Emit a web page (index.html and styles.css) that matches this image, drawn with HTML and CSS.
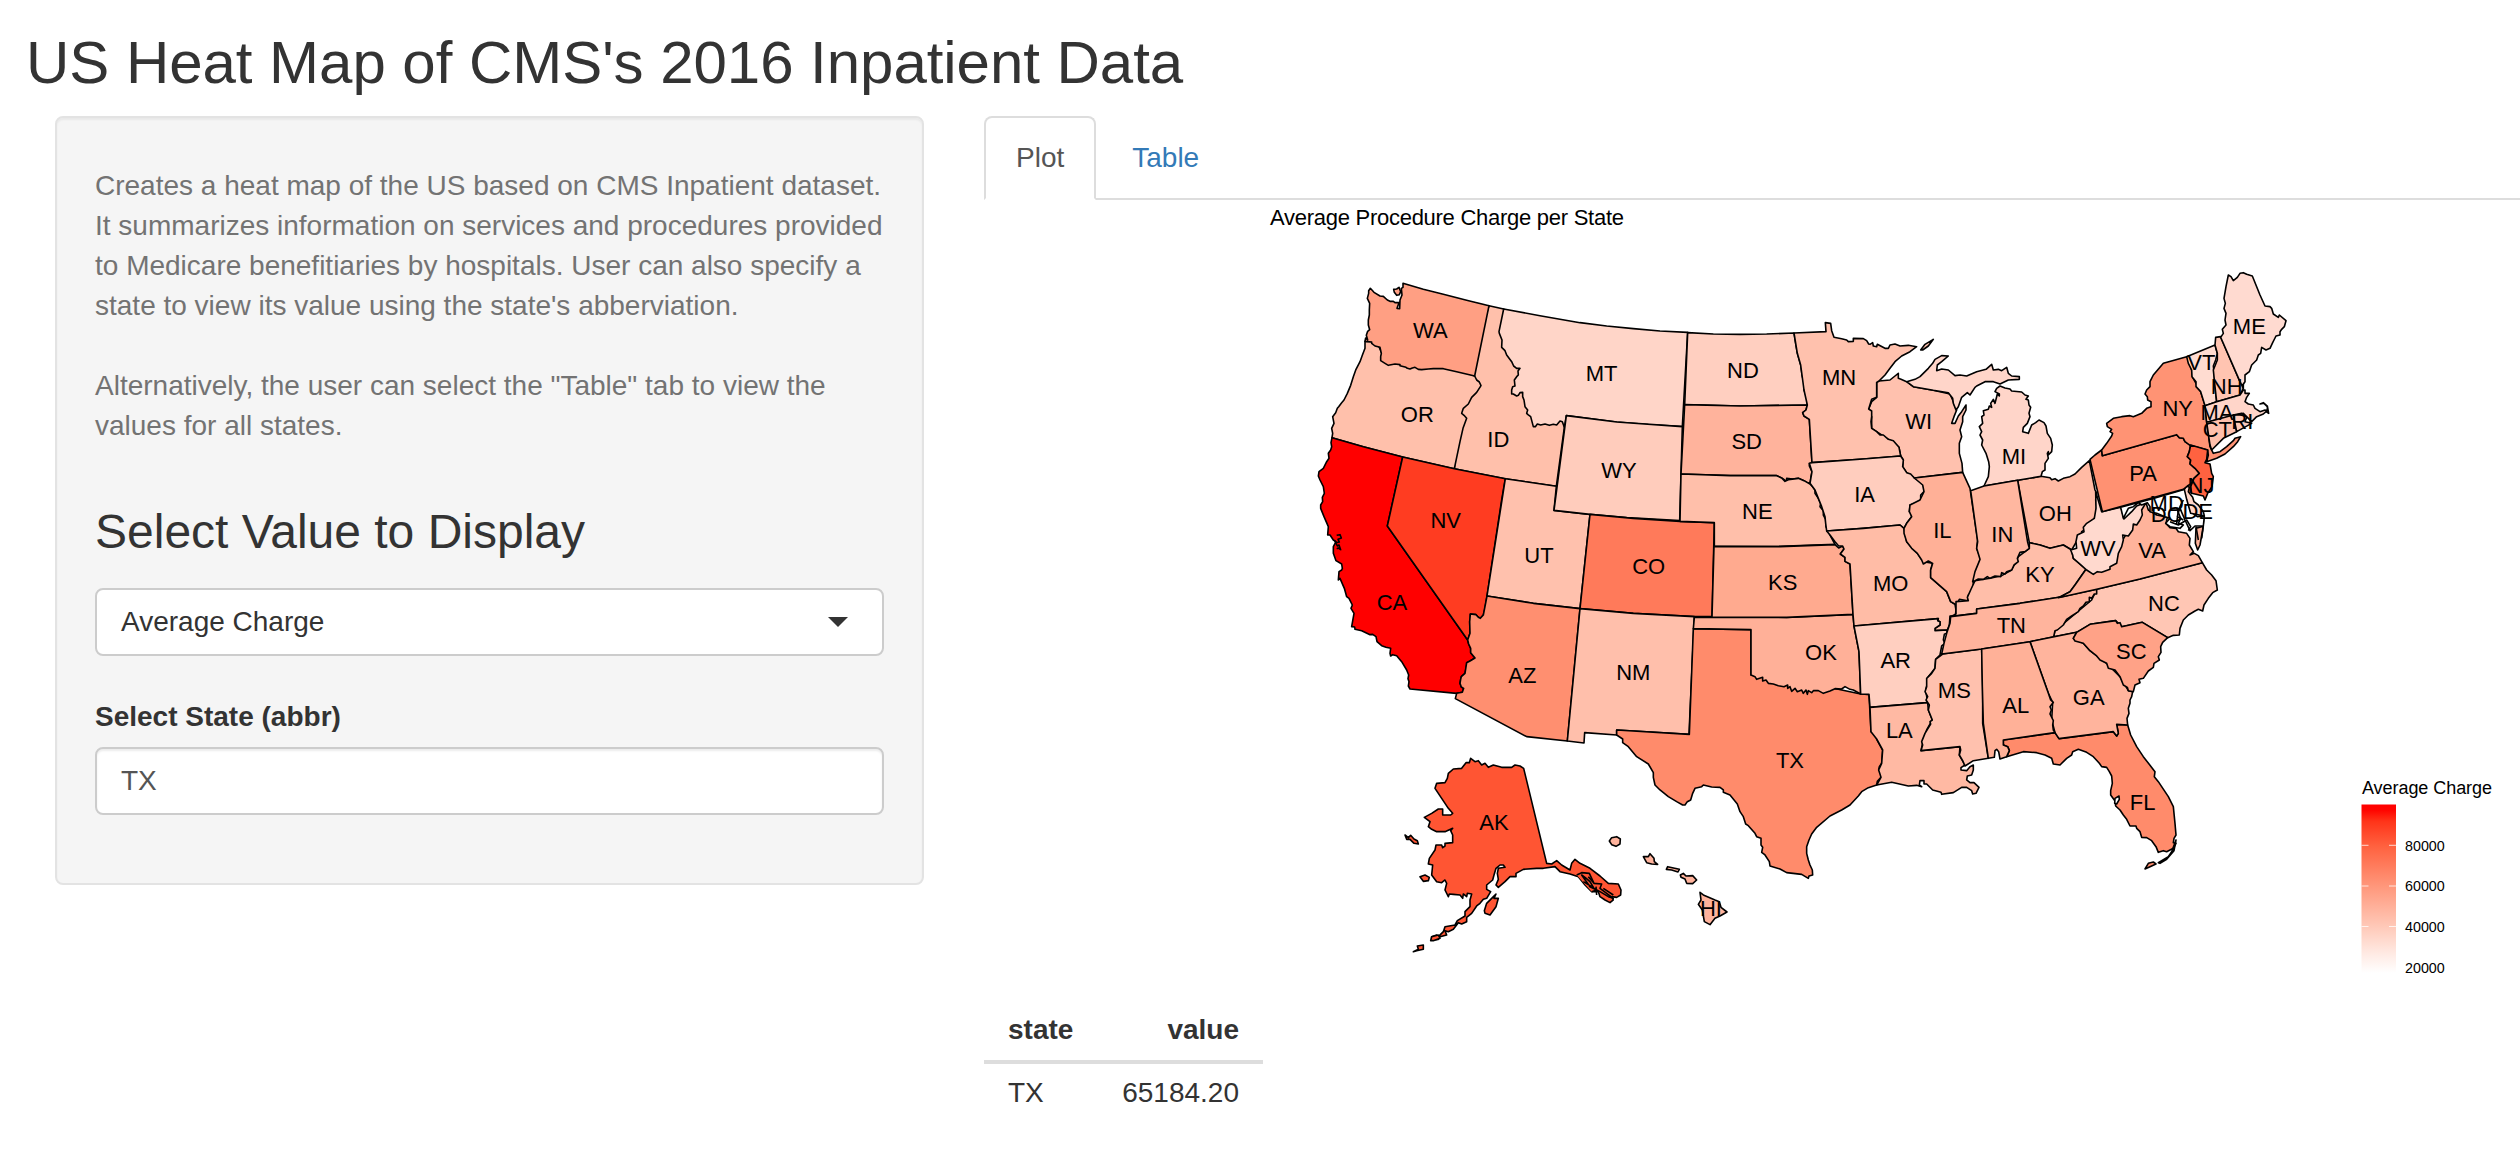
FILE: index.html
```html
<!DOCTYPE html>
<html lang="en">
<head>
<meta charset="utf-8">
<title>US Heat Map of CMS's 2016 Inpatient Data</title>
<link rel="stylesheet" href="styles.css">
</head>
<body>
<h2 class="title">US Heat Map of CMS's 2016 Inpatient Data</h2>
<div class="layout">
<form class="well">
<p class="help">Creates a heat map of the US based on CMS Inpatient dataset. It summarizes information on services and procedures provided to Medicare benefitiaries by hospitals. User can also specify a state to view its value using the state's abberviation.<br><br>Alternatively, the user can select the "Table" tab to view the values for all states.</p>
<h3 class="subtitle">Select Value to Display</h3>
<div class="control select"><span>Average Charge</span><i class="caret"></i></div>
<label class="label" for="state">Select State (abbr)</label>
<input class="control input" id="state" type="text" value="TX">
</form>
<main class="main">
<ul class="tabs"><li class="tab active">Plot</li><li class="tab">Table</li></ul>
<svg class="plot" viewBox="984 200 1536 800">
<defs><linearGradient id="scale" x1="0" y1="0" x2="0" y2="1">
<stop offset="0" stop-color="#f00"/><stop offset=".035" stop-color="#ff0500"/><stop offset=".1" stop-color="#ff3419"/><stop offset=".25" stop-color="#ff6240"/><stop offset=".48" stop-color="#ff967a"/><stop offset=".72" stop-color="#ffc8b7"/><stop offset=".88" stop-color="#ffe9e2"/><stop offset="1" stop-color="#fff"/>
</linearGradient></defs>
<text class="plot-title" x="1270" y="225" textLength="354">Average Procedure Charge per State</text>
<g transform="translate(1300 260) scale(.333333)">
<g class="states">
<!-- West -->
<path fill="#ffc0ab" d="M567 137 611 147 640 180 700 440 793 480 793 502 769 679 616 656 463 626 480 420Z"/>
<path fill="#ffc0ab" d="M195 244 195 265 187 286 180 305 168 328 160 350 152 376 142 400 132 420 125 428 116 440 112 445 107 458 98 470 102 490 95 505 98 520 96 533 190 560 308 591 463 626 480 545 489 505 500 475 492 466 485 460 490 445 505 432 515 412 530 397 543 377 538 366 530 360 524 348 430 310 250 290 230 244Z"/>
<path fill="#ff9f83" d="M309 70 370 88 430 103 500 121 567 137 524 348 470 335 430 326 400 326 385 327 365 329 355 328 345 322 337 324 330 327 322 325 318 322 300 317 300 314 285 312 265 316 255 310 242 302 242 290 244 280 240 262 225 258 215 250 215 246 195 244 197 234 203 240 199 226 203 214 209 209 205 195 205 180 208 165 208 150 209 130 202 115 206 100 206 92 211 85 222 97 240 108 250 109 262 120 270 124 280 124 285 128 297 128 291 145 299 146 300 120 306 105 304 85 309 82Z"/>
<path fill="#ff9f83" d="M281 88 290 87 297 82 302 95 298 104 290 106 283 97Z"/>
<path fill="#ffd5c8" d="M611 147 720 167 840 188 920 198 1000 206 1080 213 1163 217 1147 500 1045 494 950 486 799 467 793 502 787 485 780 483 770 495 760 493 748 496 735 492 722 495 712 492 706 500 700 500 692 470 684 464 680 460 683 450 675 440 672 420 668 410 668 397 660 398 655 406 650 408 640 402 635 402 635 390 638 380 645 378 643 360 650 350 655 345 654 333 660 325 650 325 641 318 635 305 620 285 615 272 605 262 606 240 598 220 597 215Z"/>
<path fill="#ff0000" d="M96 533 190 560 308 591 262 798 503 1140 506 1152 512 1165 512 1178 525 1194 510 1203 500 1208 500 1215 495 1240 484 1250 482 1258 480 1270 484 1281 491 1285 487 1297 470 1300 330 1287 325 1278 327 1265 324 1256 326 1245 320 1230 305 1205 290 1187 278 1184 272 1188 270 1180 272 1165 258 1162 245 1157 231 1145 228 1130 218 1123 210 1124 185 1112 165 1108 164 1101 155 1100 162 1060 153 1045 157 1035 147 1015 140 1010 133 985 120 955 115 960 117 935 125 930 127 925 125 912 108 902 100 880 100 860 108 845 100 840 90 825 83 825 85 800 72 770 62 745 62 735 68 725 67 712 73 700 70 680 60 660 55 648 57 635 70 625 80 605 87 595 85 580 92 570 95 560 93 548Z"/>
<path fill="#ff3c21" d="M308 591 463 626 616 656 605 720 561 1008 555 1045 550 1065 541 1075 535 1072 528 1064 511 1062 511 1075 509 1085 510 1120 503 1140 262 798Z"/>
<path fill="#ffc1ad" d="M616 656 769 679 762 751 870 763 840 1046 700 1030 561 1008Z"/>
<path fill="#ffccbc" d="M799 467 950 486 1147 500 1139 782 980 773 870 763 762 751Z"/>
<path fill="#ff7a5a" d="M870 763 1000 775 1140 784 1243 788 1236 1070 1183 1070 1000 1060 840 1046Z"/>
<path fill="#ff8f70" d="M561 1008 700 1030 840 1046 802 1443 680 1430 466 1316 470 1300 487 1297 491 1285 484 1281 480 1270 482 1258 484 1250 495 1240 500 1208 510 1203 525 1194 512 1178 512 1165 506 1152 503 1140 510 1120 509 1085 511 1062 528 1064 535 1072 541 1075 550 1065Z"/>
<path fill="#ffbfab" d="M840 1046 1000 1060 1183 1070 1167 1423 950 1410 950 1425 854 1418 852 1449 802 1443Z"/>
<path fill="none" d="M110 826 120 824 124 834 114 838 118 846 108 848 104 842 112 858 117 855 122 869 115 864 110 866"/>
<!-- Great plains -->
<g transform="translate(1140 150)">
<path fill="#ffcfc0" d="M23 68 100 72 180 73 260 72 342 69 346 95 352 130 362 165 366 195 372 220 372 240 380 262 382 285 180 288 14 284Z"/>
<path fill="#ffb39c" d="M14 284 180 288 382 285 378 300 368 308 372 318 388 328 396 458 388 461 388 468 396 485 393 500 390 520 380 518 372 512 355 505 338 507 320 505 320 514 305 504 290 497 150 497 3 492Z"/>
<path fill="#ffbfaa" d="M3 492 150 497 290 497 305 504 315 514 325 509 355 505 372 512 390 522 398 530 405 540 405 550 415 565 422 580 420 590 430 602 430 615 437 628 438 650 450 675 465 703 300 709 103 710 103 638 0 634Z"/>
<path fill="#ffc1ae" d="M590 217 597 213 630 210 645 198 655 190 655 205 663 208 680 215 700 230 760 241 810 252 820 275 826 292 830 300 822 320 815 340 825 340 835 318 845 305 858 285 858 300 848 320 848 335 840 360 845 380 838 400 838 430 846 460 848 487 703 504 680 488 668 470 670 450 662 438 657 412 640 398 590 365 575 355 575 320 566 297 575 275 590 262Z"/>
<path fill="#ffc1ad" d="M342 69 438 65 436 38 452 40 455 62 462 82 485 86 500 90 505 95 520 94 520 85 550 86 560 92 566 102 570 103 578 98 580 108 590 110 592 103 615 115 625 115 630 105 645 102 660 108 685 106 710 110 690 125 665 138 645 155 630 175 615 195 597 213 590 217 590 262 575 268 566 297 575 303 575 320 573 335 575 355 590 365 600 375 610 375 625 388 640 392 657 412 662 438 550 447 396 458 388 328 372 318 368 308 378 300 382 285 372 240 362 165 352 130Z"/>
<path fill="#ffcdbe" d="M396 458 550 447 662 438 670 450 668 470 680 488 692 492 703 504 723 515 732 530 732 545 722 555 722 570 705 580 690 585 688 605 695 610 695 620 680 640 672 655 660 645 550 655 440 663 437 640 435 620 425 590 415 565 405 540 390 520 396 485 388 460Z"/>
</g>
<g transform="translate(1080 840)">
<path fill="#ff8b6b" d="M100 266 273 269 273 405 450 430 602 462 627 463 633 575 650 587 650 597 668 630 665 670 658 680 656 690 663 695 663 712 652 724 650 735 625 743 605 755 595 768 570 795 545 810 510 828 470 862 455 882 447 900 440 920 440 940 445 960 450 975 457 990 458 1005 447 1008 445 1015 425 1003 380 998 360 987 330 978 328 965 315 945 305 937 308 922 303 915 303 895 290 890 285 880 265 857 257 852 250 830 240 815 232 792 210 765 190 757 190 750 180 742 155 741 130 735 125 740 105 745 98 760 92 780 82 785 75 795 68 795 50 785 25 770 0 750 -15 735 -20 712 -20 698 -35 672 -70 650 -95 620 -112 608 -112 597 -130 585 -130 570 88 583Z"/>
<path fill="#ffb098" d="M103 232 380 232 579 223 582 258 597 335 602 462 580 450 570 448 555 440 545 447 525 446 510 453 490 460 475 452 460 452 455 458 445 452 442 463 438 450 430 460 425 450 412 455 405 445 395 454 390 440 383 445 383 435 372 440 355 437 340 432 325 430 318 420 308 423 308 412 290 418 285 410 273 405 273 269 100 266Z"/>
<path fill="#ffaa8f" d="M162 19 360 20 525 14 536 24 548 18 552 27 541 42 555 52 555 64 570 72 579 223 380 232 156 231Z"/>
<path fill="#ffbca6" d="M500-27 610-35 720-45 732-35 740 5 772 40 790 65 818 70 812 90 812 113 860 155 872 185 885 193 888 210 886 228 870 228 868 255 862 270 825 272 825 265 840 255 840 245 833 242 835 236 582 258 579 223 570 72 555 64 555 52 541 42 552 27 548 18 536 18 525 5 510-15Z"/>
<path fill="#ffcfc0" d="M582 258 835 236 833 242 840 245 840 255 825 265 825 272 862 270 860 280 853 283 850 300 855 310 845 318 840 345 827 358 825 385 805 410 802 430 797 450 803 488 630 502 627 463 602 462 597 335Z"/>
<path fill="#ffb9a3" d="M630 502 803 488 805 510 817 540 800 570 790 600 783 632 900 620 898 645 915 675 903 683 903 690 920 692 930 680 940 675 940 690 935 705 922 708 920 720 930 728 942 728 957 742 948 760 938 762 935 752 920 742 905 742 880 758 845 763 843 757 818 750 800 732 792 732 792 722 780 722 778 735 785 740 770 736 745 738 695 727 650 735 663 712 656 690 665 670 668 630 650 597 633 575Z"/>
<path fill="#ffc1ae" d="M848 342 965 327 968 440 968 550 985 655 940 662 915 678 908 662 898 645 902 630 900 620 783 632 788 615 785 605 795 580 812 552 810 545 817 540 805 510 808 495 798 480 803 470 795 455 800 440 800 415 815 400 825 385 827 358Z"/>
</g>
<path fill="#ffb097" d="M1843 654 1988 637 2010 685 2033 840 2030 865 2042 895 2028 940 2030 955 2020 965 2020 992 2005 1005 2003 1022 1978 1018 1970 1035 1952 1025 1940 995 1892 953 1892 930 1898 910 1885 903 1870 912 1865 900 1852 880 1835 865 1820 845 1812 820 1812 805 1820 790 1835 770 1828 755 1830 735 1860 720 1872 695 1868 675Z"/>
<!-- Great lakes -->
<g transform="translate(1980 180)">
<path fill="#ffd5c9" d="M-160 185-135 178-120 170-95 145-82 130-75 118-55 107-35 108-55 125-68 135-70 152-55 147-35 150-15 167 0 165 20 168 50 155 78 148 95 133 100 150 115 148 125 152 140 142 145 160 155 168 178 170 178 178 145 180 120 192 100 185 75 185 50 198 45 202 30 225 22 218 5 232-5 260-12 270-20 250-22 235-35 218-80 211-140 200Z"/>
<path fill="#ffc1ad" d="M-118 90-105 73-80 58-95 78-112 90Z"/>
<path fill="#ffbaa4" d="M173 481 243 469 270 473 275 479 285 476 295 483 310 475 330 470 345 462 365 442 388 422 405 510 410 520 407 540 410 560 407 590 400 598 380 615 380 625 365 635 372 645 355 655 335 690 310 675 270 685 240 675 208 668Z"/>
<path fill="#ffd5c9" d="M110 205 120 198 135 204 150 207 155 213 185 216 195 225 205 228 198 238 205 240 207 255 212 262 207 280 210 290 202 310 190 322 188 335 205 340 215 315 227 308 237 300 252 308 258 318 262 340 272 355 277 375 275 395 265 405 265 395 262 400 265 415 255 430 255 450 247 455 243 469 173 481 72 498 85 470 88 440 86 425 78 400 65 375 68 360 60 345 65 335 58 320 68 310 65 290 72 285 70 272 85 268 88 258 95 262 92 250 100 238 105 250 112 222 118 228 118 222 105 215Z"/>
</g>
<!-- South and Appalachia -->
<g transform="translate(1920 750)">
<path fill="#ffbea9" d="M32 320 48 312 48 275 85 272 82 262 92 240 105 212 150 205 185 197 215 180 235 140 268 115 268 98 300 105 330 115 370 105 395 120 400 145 438 178 405 225 390 245 362 261 240 280 110 297 110 310Z"/>
<path fill="#ffb7a0" d="M92-58 132-72 233-89 263 97 268 115 255 125 240 127 232 145 235 155 222 165 215 180 200 185 195 192 185 188 182 200 165 198 150 205 142 200 130 208 115 207 105 212 98 215 105 185 120 148 110 115 113 95Z"/>
<path fill="#ffc6b4" d="M470 238 600 207 787 158 800 180 815 195 828 212 832 240 818 248 805 265 792 285 788 303 775 298 765 303 745 315 730 330 720 355 718 375 700 376 683 383 607 337 545 350 527 332 450 343 410 367 341 380 345 362 455 270Z"/>
<path fill="#ffb49d" d="M32 320 110 310 110 297 240 280 362 261 470 238 470 252 463 252 455 265 448 262 448 275 438 277 430 288 420 295 415 305 395 318 380 328 370 345 352 360 345 362 341 380 270 395 125 417 5 432 12 400 20 370 30 340Z"/>
<path fill="#ffb39b" d="M355 263 470 238 600 207 787 158 775 137 763 130 750 135 760 125 748 105 750 85 740 70 715 65 708 55 690 53 678 40 682 22 650 15 625 0 618-22 600 0 560 70 500 170 438 178 405 225 390 245Z"/>
<path fill="#ffb39b" d="M768 55 785 50 792 20 788 60 780 105 773 120 766 100Z"/>
<path fill="#ffd9ce" d="M467-55 485 5 543-8 552 27 575 5 590-12 605-18 618-22 605 0 607 15 600 30 590 45 580 42 578 60 565 78 548 75 550 90 545 110 535 130 530 160 510 170 510 178 485 187 472 185 460 193 440 180 420 162 400 145 398 135 392 120 410 115 408 95 412 75 432 65 430 52 440 40 463 25 468-5Z"/>
<path fill="#ff8b6b" d="M190 690 345 668 357 686 520 665 530 678 535 670 530 643 563 645 572 675 590 710 610 740 645 785 643 800 655 815 685 860 700 890 705 940 708 975 702 985 700 998 708 1000 700 1015 680 1025 670 1022 655 1027 648 1010 635 992 620 983 605 982 600 965 590 955 588 948 570 948 560 928 550 915 540 900 527 888 525 873 512 855 512 842 517 820 515 798 508 785 500 772 485 770 478 760 460 740 440 727 415 718 398 725 395 735 380 745 360 765 340 762 335 745 315 735 290 728 250 725 200 740 208 722 203 710 190 705Z"/>
<path fill="#ffb49d" d="M270 395 410 367 400 385 430 400 450 422 500 460 540 500 565 542 578 545 575 560 570 570 570 580 565 595 567 610 561 625 563 645 530 643 535 670 530 678 520 665 357 686 345 668 335 630 338 577 325 550Z"/>
<path fill="#ffa287" d="M410 367 450 343 527 332 532 340 540 338 545 350 607 337 683 383 668 397 662 410 663 427 655 440 658 450 642 460 640 472 625 483 610 505 597 508 600 518 585 525 580 545 565 542 562 532 550 525 540 500 525 480 505 475 500 460 480 450 470 438 450 422 430 400 405 393 400 385Z"/>
<path fill="#ffb198" d="M125 417 270 395 325 550 332 570 340 577 330 590 334 600 330 612 340 632 338 645 340 660 345 668 190 690 190 705 203 710 208 722 200 740 180 747 176 725 170 718 165 722 163 742 145 745 130 640 127 530Z"/>
<path fill="#fff" d="M525 865 537 858 538 868 530 882 524 880Z"/>
<path class="reef" d="M655 1058 685 1040 695 1025 708 990 702 1022 680 1048 660 1060Z"/>
<path fill="#ff8b6b" d="M615 1077 625 1060 640 1056 648 1062 630 1070Z"/>
</g>
<!-- Northeast -->
<g transform="translate(2310 0)">
<path fill="#fff" d="M152 742 245 717 345 688 362 755 382 770 403 768 400 798 375 798 360 812 345 780 330 745 322 750 332 775 325 790 340 795 330 805 300 800 287 790 300 775 285 770 260 760 240 755 240 740 232 728 215 735 205 728 190 740 175 745 160 775Z"/>
<path fill="#ffd5c8" d="M343 688 350 678 358 682 355 695 368 712 372 725 385 735 400 755 403 768 362 760 350 718Z"/>
<path fill="none" d="M325 750 320 790 M340 720 330 740 322 770 340 780 M300 785 325 795 350 780 362 800 355 812 M378 800 385 840M400 798 395 835"/>
<path fill="#ff9172" d="M60 598 75 585 95 570 97 587 320 524 328 533 340 535 345 545 362 555 358 575 352 590 362 600 360 612 375 625 388 640 372 655 362 672 352 678 340 688 97 755Z"/>
<path fill="#ff9374" d="M95 570 110 550 125 528 128 520 120 515 125 508 112 500 110 490 130 475 155 470 180 467 190 470 215 460 230 445 243 440 243 425 233 420 232 410 225 402 230 390 240 380 240 365 250 345 280 310 350 290 362 303 360 315 365 330 368 352 378 370 392 395 405 435 410 485 420 560 430 580 450 575 470 560 490 542 495 535 512 530 503 545 490 560 465 582 440 595 410 605 415 585 413 570 360 556 345 545 340 535 328 533 320 524 97 587Z"/>
<path fill="#ff6240" d="M362 555 413 570 410 598 405 608 420 612 425 640 430 650 426 680 413 700 405 720 400 708 365 700 362 680 372 655 388 640 375 625 360 612 362 600 352 590 358 575Z"/>
<path fill="#ffdcd1" d="M350 290 435 255 442 280 437 300 430 318 433 345 435 380 440 425 405 437 392 395 378 380 378 365 366 350 365 330 355 310Z"/>
<path fill="#ffc4b1" d="M435 255 437 232 452 230 510 365 520 370 520 385 510 405 440 425 435 380 430 330 442 300 442 280Z"/>
<path fill="#ffdad0" d="M452 232 460 220 457 208 468 195 465 180 468 160 462 145 466 130 462 115 468 80 475 45 483 50 490 62 502 52 510 40 520 38 530 43 547 48 570 105 585 138 600 140 605 145 610 162 625 172 628 165 648 182 643 200 635 208 630 215 630 225 618 228 612 240 608 248 600 265 588 270 575 262 572 280 565 285 560 300 545 315 538 335 525 345 525 365 518 375 520 385 510 365Z"/>
<path fill="#ffd5c9" d="M405 437 440 425 510 405 520 390 525 390 525 400 538 400 530 412 525 425 535 432 550 435 555 445 570 455 585 450 592 452 592 440 582 430 570 432 580 428 592 438 596 460 588 455 580 462 560 470 545 485 520 460 410 487Z"/>
<path fill="#ffc0ac" d="M410 487 490 465 500 515 460 535 425 570 420 555Z"/>
<path fill="#ffcab9" d="M490 465 515 460 530 472 525 485 545 490 500 515Z"/>
</g>
<!-- Alaska and Hawaii -->
<g transform="translate(270 1440)">
<g fill="#ff5533">
<path d="M401 85 470 370 485 372 500 362 515 375 540 390 545 370 555 358 570 370 600 385 630 408 655 430 685 432 693 450 692 465 680 472 665 470 670 480 660 488 645 480 630 470 625 455 605 455 585 435 565 410 540 402 510 395 495 380 460 385 440 385 400 388 378 400 378 410 360 410 345 425 325 442 318 435 325 418 322 400 325 385 345 382 340 375 330 375 318 385 312 405 308 420 290 435 290 448 302 455 290 475 280 478 270 490 260 498 245 520 230 532 230 545 215 552 205 548 190 568 175 575 165 572 170 585 150 590 145 598 125 600 125 590 140 585 145 590 160 575 165 560 195 555 202 542 225 528 225 515 240 500 240 480 245 462 232 460 230 470 220 462 218 475 210 465 190 463 178 462 175 470 165 450 170 430 165 420 155 428 140 425 125 405 128 375 115 372 118 355 135 330 138 315 155 315 158 323 165 318 165 310 188 308 188 285 182 272 188 265 165 275 140 275 125 268 115 260 120 245 103 232 125 220 145 207 158 207 158 225 182 225 188 220 175 205 165 190 155 175 135 145 140 130 165 128 172 115 175 100 190 87 215 85 228 68 238 68 242 55 255 65 265 62 275 75 285 70 295 82 310 75 335 82 365 82 375 75 390 78Z"/>
<path d="M45 285 55 293 62 286 72 297 82 302 85 312 72 310 60 298 50 298Z"/>
<path d="M90 410 105 405 118 412 115 422 100 424Z"/>
<path d="M283 512 290 490 308 472 318 462 312 475 325 475 318 500 300 525 285 520Z"/>
<path d="M70 635 85 628 82 618 100 615 100 628 80 632Z"/>
<path d="M122 602 125 590 145 585 150 595 130 602Z"/>
<path d="M560 405 575 398 598 400 612 430 635 432 630 445 650 460 670 475 655 470 630 455 612 445 600 425 585 412 575 405 600 440 620 450 605 455M612 430 595 410M620 465 618 440M580 425 605 440M640 445 670 465"/>
</g>
<g fill="#ffb39c">
<path d="M658 303 665 293 680 290 691 297 690 312 678 319 665 314Z"/>
<path d="M760 350 775 350 780 341 792 355 793 365 803 373 785 372 770 368Z"/>
<path d="M829 388 833 380 868 388 864 396 845 390Z"/>
<path d="M871 405 880 400 888 408 908 407 920 420 908 431 890 430 885 417 873 412Z"/>
<path d="M930 457 940 465 975 480 988 485 993 502 1011 516 990 528 975 535 960 554 943 545 937 510 925 493 933 480Z"/>
</g>
</g>
</g>
<g class="names">
<text x="391" y="234">WA</text><text x="352" y="486">OR</text><text x="595" y="561">ID</text><text x="905" y="362">MT</text><text x="957" y="653">WY</text><text x="437" y="803">NV</text><text x="717" y="908">UT</text><text x="1046" y="943">CO</text><text x="276" y="1049">CA</text><text x="667" y="1270">AZ</text><text x="1000" y="1259">NM</text>
<text x="1329" y="354">ND</text><text x="1617" y="376">MN</text><text x="1340" y="566">SD</text><text x="1372" y="777">NE</text><text x="1694" y="726">IA</text><text x="1856" y="506">WI</text><text x="1927" y="833">IL</text>
<text x="1448" y="990">KS</text><text x="1772" y="994">MO</text><text x="1563" y="1201">OK</text><text x="1787" y="1223">AR</text><text x="1963" y="1315">MS</text><text x="1798" y="1433">LA</text><text x="1470" y="1523">TX</text>
<text x="2142" y="611">MI</text><text x="2266" y="782">OH</text><text x="2107" y="847">IN</text><text x="2220" y="965">KY</text><text x="2394" y="889">WV</text><text x="2556" y="894">VA</text><text x="2592" y="1053">NC</text><text x="2134" y="1118">TN</text><text x="2494" y="1196">SC</text><text x="2147" y="1358">AL</text><text x="2366" y="1336">GA</text><text x="2528" y="1650">FL</text>
<text x="2848" y="221">ME</text><text x="2704" y="330">VT</text><text x="2780" y="402">NH</text><text x="2633" y="468">NY</text><text x="2751" y="481">MA</text><text x="2827" y="506">RI</text><text x="2752" y="530">CT</text><text x="2529" y="662">PA</text><text x="2703" y="700">NJ</text><text x="2600" y="753">MD</text><text x="2600" y="785">DC</text><text x="2693" y="777">DE</text>
<text x="582" y="1710">AK</text><text x="1233" y="1967">HI</text>
</g>
</g>
<text class="legend-title" x="2362" y="794" textLength="130">Average Charge</text>
<rect x="2361.5" y="804.5" width="34.5" height="168.5" fill="url(#scale)"/>
<path class="ticks" d="M2361.5 845.3h7M2389 845.3h7M2361.5 886h7M2389 886h7M2361.5 926.5h7M2389 926.5h7"/>
<g class="legend-label"><text x="2405" y="850.5">80000</text><text x="2405" y="891">60000</text><text x="2405" y="931.5">40000</text><text x="2405" y="972.5">20000</text></g>
</svg>
<table class="values"><thead><tr><th>state</th><th>value</th></tr></thead><tbody><tr><td>TX</td><td>65184.20</td></tr></tbody></table>
</main>
</div>
</body>
</html>
```

FILE: styles.css
```css
* { box-sizing: border-box; }
body { margin: 0; background: #fff; color: #333; font: 28px/40px "Liberation Sans", Arial, sans-serif; overflow: hidden; }
.title { margin: 0; padding: 30px 26px 20px; font-size: 60px; line-height: 66px; font-weight: normal; letter-spacing: -.04px; }
.layout { display: flex; align-items: flex-start; gap: 60px; padding-left: 55px; }
.well { width: 869px; height: 769px; flex: none; padding: 38px; background: #f5f5f5; border: 2px solid #e3e3e3; border-radius: 8px; box-shadow: inset 0 2px 2px rgba(0,0,0,.05); }
.help { margin: 10px 0 0; color: #737373; }
.subtitle { margin: 59px 0 30px; font-size: 48px; line-height: 53px; font-weight: normal; }
.control { display: flex; align-items: center; width: 100%; height: 68px; padding: 0 24px; border: 2px solid #ccc; border-radius: 8px; background: #fff; font: 28px/40px "Liberation Sans", Arial, sans-serif; }
.select { justify-content: space-between; padding-right: 34px; }
.caret { width: 0; border: 10px solid transparent; border-top-color: #333; border-bottom: 0; }
.label { display: block; margin: 41px 0 10px; font-weight: bold; }
.input { color: #555; box-shadow: inset 0 2px 2px rgba(0,0,0,.075); }
.main { flex: 1; min-width: 0; }
.tabs { display: flex; gap: 4px; height: 84px; margin: 0; padding: 0; list-style: none; border-bottom: 2px solid #ddd; }
.tab { height: 84px; padding: 20px 30px; border: 2px solid transparent; border-radius: 8px 8px 0 0; color: #337ab7; }
.active { color: #555; background: #fff; border-color: #ddd #ddd #fff; }
.plot { display: block; width: 1536px; height: 800px; font-family: "Liberation Sans", Arial, sans-serif; fill: #000; }
.plot-title { font-size: 22px; }
.states { stroke: #000; stroke-width: 4.8; stroke-linejoin: round; }
.reef { fill: #000; }
.names { font-size: 66px; text-anchor: middle; }
.legend-title { font-size: 18px; }
.legend-label { font-size: 14.3px; }
.ticks { stroke: #fff; stroke-opacity: .75; }
.values { width: 279px; border-collapse: collapse; }
.values th { height: 62px; padding: 0 24px; text-align: left; border-bottom: 4px solid #ddd; }
.values td { height: 60px; padding: 0 24px; }
.values th + th, .values td + td { text-align: right; }
```
